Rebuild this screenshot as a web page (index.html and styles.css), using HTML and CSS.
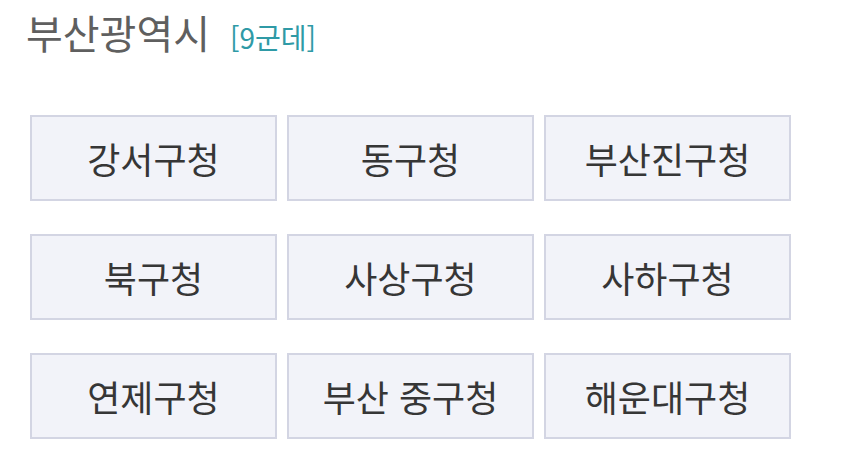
FILE: index.html
```html
<!DOCTYPE html>
<html lang="ko">
<head>
<meta charset="utf-8">
<link rel="stylesheet" href="styles.css">
</head>
<body>
<div class="page">
  <div class="header">
    <span class="title">부산광역시</span>
    <span class="count">[9군데]</span>
  </div>
  <div class="grid">
    <div class="btn">강서구청</div>
    <div class="btn">동구청</div>
    <div class="btn">부산진구청</div>
    <div class="btn">북구청</div>
    <div class="btn">사상구청</div>
    <div class="btn">사하구청</div>
    <div class="btn">연제구청</div>
    <div class="btn">부산 중구청</div>
    <div class="btn">해운대구청</div>
  </div>
</div>
</body>
</html>
```
FILE: styles.css
```css
html, body {
  margin: 0;
  padding: 0;
  background: #ffffff;
}
body {
  font-family: "Noto Sans CJK KR", "Noto Sans", sans-serif;
}
.page {
  padding: 6px 0 0 26px;
}
.header {
  display: flex;
  align-items: baseline;
  gap: 20px;
  height: 52px;
}
.title {
  font-size: 40px;
  line-height: 52px;
  color: #5f5f5f;
}
.count {
  font-size: 28px;
  color: #2f9aa6;
}
.grid {
  margin-top: 57px;
  margin-left: 4px;
  display: grid;
  grid-template-columns: repeat(3, 247px);
  grid-auto-rows: 86px;
  column-gap: 10px;
  row-gap: 33px;
}
.btn {
  box-sizing: border-box;
  border: 2px solid #d3d5e3;
  background: #f2f3f9;
  display: flex;
  align-items: center;
  justify-content: center;
  font-size: 36px;
  color: #363636;
}
```
